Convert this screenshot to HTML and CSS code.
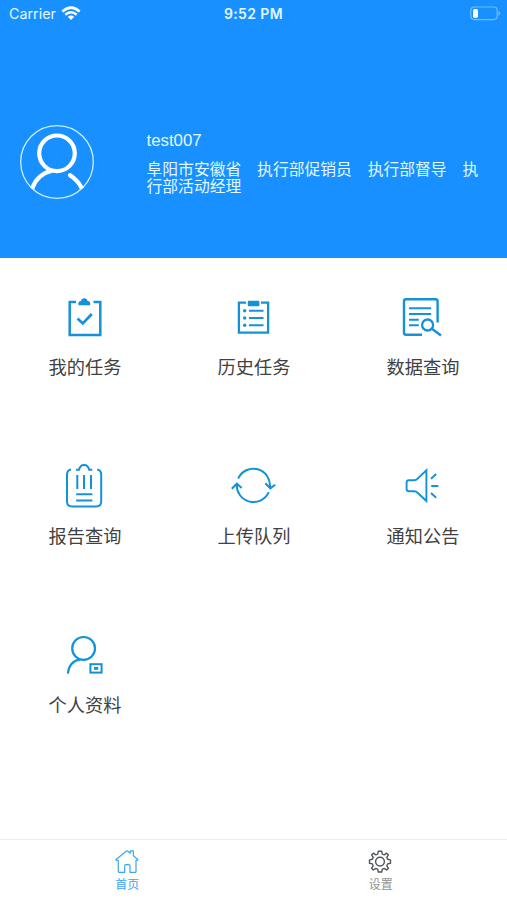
FILE: index.html
```html
<!DOCTYPE html>
<html lang="zh-CN">
<head>
<meta charset="utf-8">
<title>首页</title>
<link rel="stylesheet" href="styles.css">
</head>
<body>
<div class="app">
  <header class="hero">
    <div class="status">
      <div class="carrier"><span>Carrier</span>
        <svg width="20" height="15" viewBox="0 0 20 15" fill="none" stroke="#fff" stroke-width="2.5"><path d="M1.3 5.5Q10-2.3 18.7 5.5M4.3 8.7Q10 3.8 15.7 8.7"/><path d="M6.8 10.8Q10 8.2 13.2 10.8L10 14Z" fill="#fff" stroke="none"/></svg>
      </div>
      <div class="time">9:52 PM</div>
      <svg class="battery" width="31" height="15" viewBox="0 0 31 15" fill="none"><rect x=".8" y="1" width="26.4" height="12.6" rx="3.5" stroke="#72bcff" stroke-width="1.2"/><rect x="3" y="3" width="5" height="9" rx="1.8" fill="#fff"/><path d="M28.5 4.7q3.4 2.6 0 5.2z" fill="#72bcff"/></svg>
    </div>
    <div class="profile">
      <svg class="avatar" width="76" height="76" viewBox="0 0 76 76" fill="none" stroke="#fff"><circle cx="38" cy="38" r="36.3" stroke="#c9f0ff" stroke-width="1.3"/><g stroke-width="4.2"><circle cx="38" cy="29.3" r="17.8"/><path d="M33 46.7C23 49 16 56 13.2 64.5"/><path d="M51 51.3C57 55 60.5 59.5 62.8 64.5"/><path d="M51 51.3L52 52" stroke-linecap="round"/></g></svg>
      <div class="info">
        <div class="name">test007</div>
        <div class="roles">阜阳市安徽省　执行部促销员　执行部督导　执行部活动经理</div>
      </div>
    </div>
  </header>

  <main class="grid">
    <div class="cell">
      <svg class="icon" viewBox="0 0 48 48"><path d="M16 8H9.7V41H40.3V8H33.5" stroke-width="2.5"/><path d="M18.5 11.2Q17.6 7.3 21 7.1Q21.3 4.2 24.3 4.2T27.6 7.1Q31 7.3 30.1 11.2Z" fill="#1492d8" stroke="none"/><path d="M17.5 24.5L22.8 29.4L31.8 20" stroke-width="2.7"/></svg>
      <span>我的任务</span>
    </div>
    <div class="cell">
      <svg class="icon" viewBox="0 0 48 48"><path d="M17 8.6H9.9V38.6H39.1V8.6H32" stroke-width="2.3"/><rect x="18.8" y="6.7" width="11.6" height="5.5" rx="1" fill="#1492d8" stroke="none"/><path d="M20 16.7H34.5M20 24H34.5M20 31.3H34.5"/><g fill="#1492d8" stroke="none"><circle cx="15.7" cy="16.7" r="1.7"/><circle cx="15.7" cy="24" r="1.7"/><circle cx="15.7" cy="31.3" r="1.7"/></g></svg>
      <span>历史任务</span>
    </div>
    <div class="cell">
      <svg class="icon" viewBox="0 0 48 48"><path d="M24 40.8H8Q6 40.8 6 38.8V7.3Q6 5.3 8 5.3H37.6Q39.6 5.3 39.6 7.3V28.5" stroke-width="2.4"/><path d="M11 14.3H33.2M11 20H33.2M11 25.8H20.8M11 31.3H20.8"/><circle cx="29.6" cy="31" r="5.5" stroke-width="2.3"/><path d="M34.2 35L43 41.5" stroke-width="2.5"/></svg>
      <span>数据查询</span>
    </div>
    <div class="cell">
      <svg class="icon" viewBox="0 0 48 48"><path d="M11 6.4Q7 7.2 7 11.5V38.5Q7 43.4 12 43.4H36.2Q41.2 43.4 41.2 38.5V11.5Q41.2 7.2 37.2 6.4"/><path d="M16 6.8H19Q20 2 24.1 2T29.2 6.8H32.3M17.3 12V26M24 12V26M31 12V26M16.2 31.2H32.4M16.2 37.4H32.4"/></svg>
      <span>报告查询</span>
    </div>
    <div class="cell">
      <svg class="icon" viewBox="0 0 48 48"><path d="M9.2 15.5A16.6 16.6 0 0 1 40.8 24.5M39.8 29.2A16.75 16.75 0 0 1 7.8 21.3M36.3 20.3L41.3 25.4L46.2 21.8M2.8 25.8L7.8 20.7L12.7 25"/></svg>
      <span>上传队列</span>
    </div>
    <div class="cell">
      <svg class="icon" viewBox="0 0 48 48"><path d="M10.8 17.2H16.2Q18.2 17.2 19.6 15.6L28.4 7.2V38L19.6 29.8Q18.2 28.2 16.2 28.2H10.8Q8.6 28.2 8.6 26V19.4Q8.6 17.2 10.8 17.2ZM33 15.7L38.2 11M33.2 23H40.4M33 30L38.2 34.7" stroke-width="1.9"/></svg>
      <span>通知公告</span>
    </div>
    <div class="cell">
      <svg class="icon" viewBox="0 0 48 48"><circle cx="23.6" cy="16.4" r="11.4" stroke-width="2.2"/><path d="M20 27.3C12.5 28.7 8.6 34 7.9 41.6" stroke-width="2.2"/><rect x="30.4" y="32.2" width="11.2" height="8.4"/><path d="M34 36.4H38.2" stroke-width="2.8"/></svg>
      <span>个人资料</span>
    </div>
  </main>

  <nav class="tabs">
    <div class="tab active">
      <svg width="26" height="26" viewBox="0 0 26 26" fill="none" stroke="#3ea5ec" stroke-width="1.2" stroke-linejoin="round"><path d="M4.3 12.3H2.5Q1.5 12 2.3 11.2L12.5 3Q13 2.6 13.5 3L16.2 5.2V2.8H19.4V7.8L23.5 11.2Q24.3 12 23.3 12.3H22V23.5Q22 24.4 21 24.4H16V18Q16 16.7 14.7 16.7H12Q10.7 16.7 10.7 18V24.4H5.3Q4.3 24.4 4.3 23.5Z"/></svg>
      <span>首页</span>
    </div>
    <div class="tab">
      <svg width="26" height="26" viewBox="0 0 26 26" fill="none" stroke="#50565a" stroke-width="1.4" stroke-linejoin="round"><circle cx="13" cy="13.6" r="4.4"/><path d="M11.3 3.2H14.7L15.3 6.1Q16.3 6.4 17.2 6.9L19.7 5.2L21.4 6.9L19.8 9.4Q20.3 10.3 20.6 11.3L23.5 11.9V15.3L20.6 15.9Q20.3 16.9 19.8 17.8L21.4 20.3L19.7 22L17.2 20.4Q16.3 20.9 15.3 21.2L14.7 24H11.3L10.7 21.2Q9.7 20.9 8.8 20.4L6.3 22L4.6 20.3L6.2 17.8Q5.7 16.9 5.4 15.9L2.5 15.3V11.9L5.4 11.3Q5.7 10.3 6.2 9.4L4.6 6.9L6.3 5.2L8.8 6.9Q9.7 6.4 10.7 6.1Z"/></svg>
      <span>设置</span>
    </div>
  </nav>
</div>
</body>
</html>
```
FILE: styles.css
```css
* { box-sizing: border-box; }
body {
  margin: 0;
  background: #fff;
  font-family: "Liberation Sans", "Noto Sans CJK SC", sans-serif;
}
.app {
  width: 507px;
  height: 900px;
  display: flex;
  flex-direction: column;
  overflow: hidden;
}
.hero {
  height: 258px;
  flex: none;
  background: #1890ff;
  color: #e4f8ff;
}
.status {
  height: 27px;
  padding: 0 6px 0 9px;
  display: grid;
  grid-template-columns: 1fr auto 1fr;
  align-items: center;
}
.carrier {
  display: flex;
  align-items: center;
  gap: 5px;
  font: 14.3px/27px Inter, sans-serif;
}
.carrier svg { margin-top: -1px; }
.time {
  font: 600 14px/27px Inter, sans-serif;
  letter-spacing: 0.4px;
  margin-left: -3px;
}
.battery { justify-self: end; }
.profile {
  display: flex;
  padding: 97px 19px 0 19px;
}
.avatar { flex: none; }
.info { margin-left: 51.5px; padding-top: 7px; width: 334px; }
.name { font-size: 16.8px; line-height: 20px; }
.roles {
  margin-top: 10px;
  font-size: 15.8px;
  line-height: 17px;
}
.grid {
  flex: 1;
  display: grid;
  grid-template-columns: repeat(3, 1fr);
  grid-auto-rows: 169px;
}
.cell {
  display: flex;
  flex-direction: column;
  align-items: center;
  padding-top: 36px;
  font-size: 18.2px;
  line-height: 26px;
  color: #414141;
}
.cell span { margin: 13px 0 0 1px; }
.icon {
  width: 48px;
  height: 48px;
  margin-left: -1px;
  fill: none;
  stroke: #1492d8;
  stroke-width: 2;
}
.tabs {
  height: 61px;
  flex: none;
  border-top: 1px solid #ececec;
  display: grid;
  grid-template-columns: 1fr 1fr;
}
.tab {
  display: flex;
  flex-direction: column;
  align-items: center;
  padding-top: 8px;
  font-size: 12px;
  line-height: 16px;
  color: #929292;
}
.tab span { margin: 3px 0 0 1px; }
.tab.active { color: #3da2f8; }
```
